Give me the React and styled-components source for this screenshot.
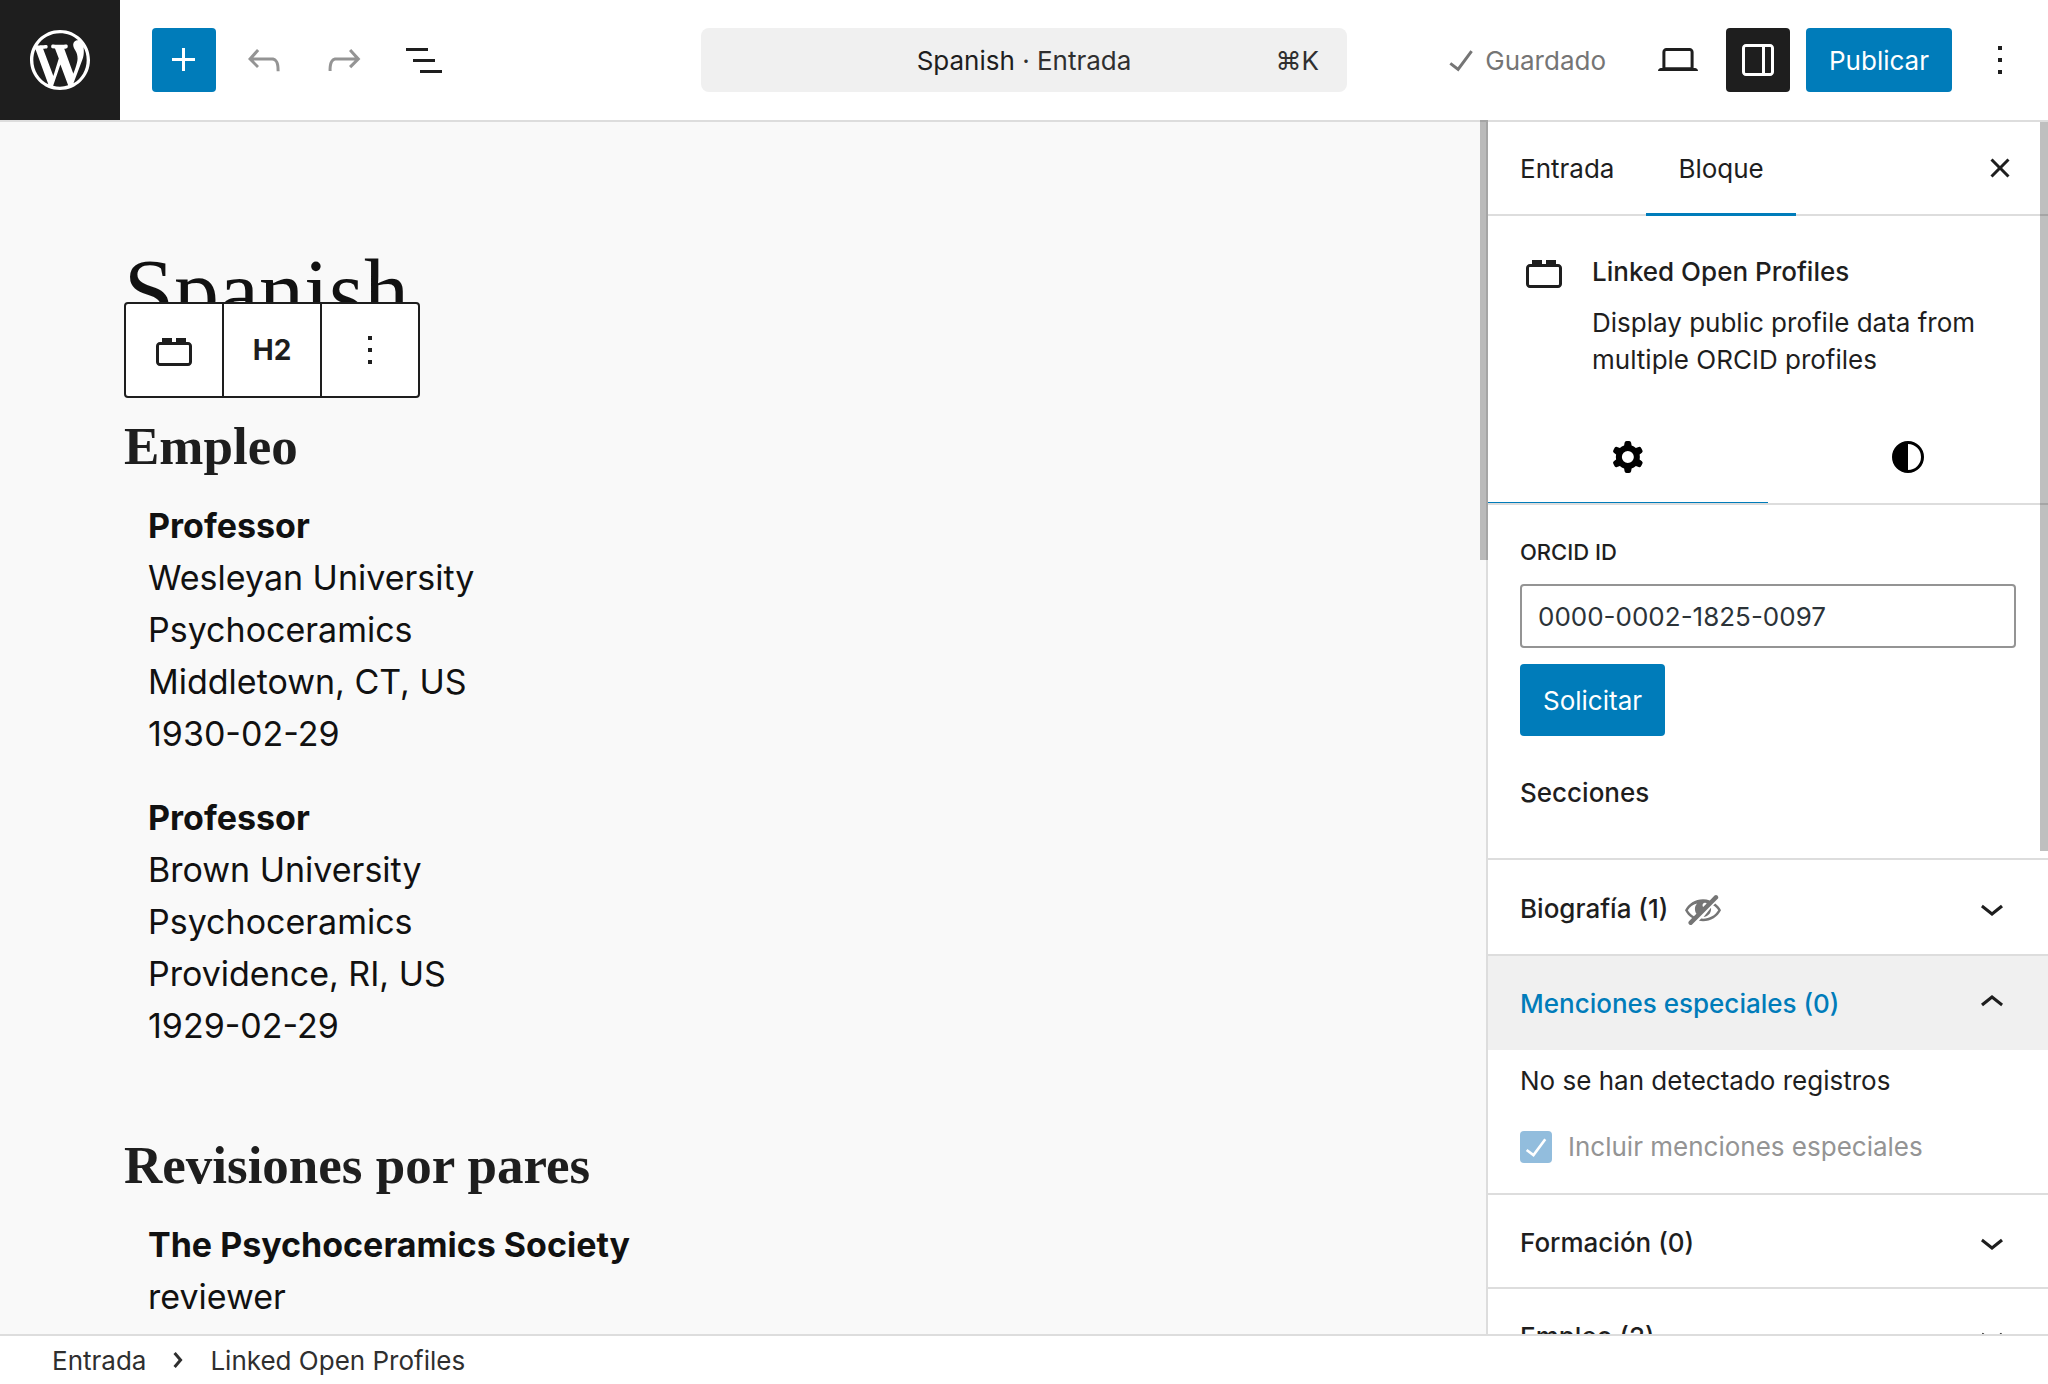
import React from "react";
import styled, { createGlobalStyle } from "styled-components";

const color = {
  ink: "#1e1e1e",
  text: "#2f2f2f",
  accent: "#007cba",
  line: "#dddddd",
  muted: "#757575",
  surface: "#f0f0f0",
  canvas: "#f9f9f9",
};

const GlobalStyle = createGlobalStyle`
  *, *::before, *::after { box-sizing: border-box; }
  html, body, #root { height: 100%; }
  body {
    margin: 0;
    color: ${color.ink};
    font-family: Inter, "Liberation Sans", sans-serif;
    font-size: 26px;
    line-height: 37px;
  }
  button, input { font: inherit; color: inherit; }
  button { margin: 0; padding: 0; border: 0; background: none; cursor: pointer; }
  h1, h2, h3, p, ul, ol { margin: 0; padding: 0; }
  ul, ol { list-style: none; }
`;

const paths = {
  wordpress:
    "M20 10c0-5.51-4.49-10-10-10C4.48 0 0 4.49 0 10c0 5.52 4.48 10 10 10 5.51 0 10-4.48 10-10zM7.78 15.37L4.37 6.22c.55-.02 1.17-.08 1.17-.08.5-.06.44-1.13-.06-1.11 0 0-1.45.11-2.37.11-.18 0-.37 0-.58-.01C4.12 2.69 6.87 1.11 10 1.11c2.33 0 4.45.87 6.05 2.34-.68-.11-1.65.39-1.65 1.58 0 .74.45 1.36.9 2.1.35.61.55 1.36.55 2.46 0 1.49-1.4 5-1.4 5l-3.03-8.37c.54-.02.82-.17.82-.17.5-.05.44-1.25-.06-1.22 0 0-1.44.12-2.38.12-.87 0-2.33-.12-2.33-.12-.5-.03-.56 1.2-.06 1.22l.92.08 1.26 3.41zM17.41 10c.24-.64.74-1.87.43-4.25.7 1.29 1.05 2.71 1.05 4.25 0 3.29-1.73 6.24-4.4 7.78.97-2.59 1.94-5.2 2.92-7.78zM6.1 18.09C3.12 16.65 1.11 13.53 1.11 10c0-1.3.23-2.48.72-3.59C3.25 10.3 4.67 14.2 6.1 18.09zm4.03-6.63l2.58 6.98c-.86.29-1.76.45-2.71.45-.79 0-1.57-.11-2.29-.33.81-2.38 1.62-4.74 2.42-7.1z",
  plus: "M11 12.5V17.5H12.5V12.5H17.5V11H12.5V6H11V11H6V12.5H11Z",
  undo: "M18.3 11.7c-.6-.6-1.4-.9-2.3-.9H6.7l2.9-3.3-1.1-1-4.5 5L8.5 16l1-1-2.7-2.7H16c.5 0 .9.2 1.3.5 1 1 1 3.4 1 4.5v.3h1.5v-.2c0-1.5 0-4.3-1.5-5.7z",
  redo: "M15.6 6.5l-1.1 1 2.9 3.3H8c-.9 0-1.7.3-2.3.9-1.4 1.5-1.4 4.2-1.4 5.6v.2h1.5v-.3c0-1.1 0-3.5 1-4.5.3-.3.7-.5 1.3-.5h9.2L14.5 15l1.1 1.1 4.6-4.6-4.6-5z",
  list: "M3 6h11v1.5H3V6Zm3.5 5.5h11V13h-11v-1.5ZM21 17H10v1.5h11V17Z",
  check: "M16.7 7.1l-6.3 8.5-3.3-2.5-.9 1.2 4.5 3.4L17.9 8z",
  desktop:
    "M20.5 16h-.7V8c0-1.1-.9-2-2-2H6.2c-1.1 0-2 .9-2 2v8h-.7c-.8 0-1.5.7-1.5 1.5h20c0-.8-.7-1.5-1.5-1.5zM5.7 8c0-.3.2-.5.5-.5h11.6c.3 0 .5.2.5.5v7.6H5.7V8z",
  drawer:
    "M18 4H6c-1.1 0-2 .9-2 2v12c0 1.1.9 2 2 2h12c1.1 0 2-.9 2-2V6c0-1.1-.9-2-2-2zm-4 14.5H6c-.3 0-.5-.2-.5-.5V6c0-.3.2-.5.5-.5h8v13zm4.5-.5c0 .3-.2.5-.5.5h-2.5v-13H18c.3 0 .5.2.5.5v12z",
  more: "M13 19h-2v-2h2v2zm0-6h-2v-2h2v2zm0-6h-2V5h2v2z",
  close:
    "M12 13.06l3.712 3.713 1.061-1.06L13.061 12l3.712-3.712-1.06-1.06L12 10.938 8.288 7.227l-1.061 1.06L10.939 12l-3.712 3.712 1.06 1.061L12 13.061z",
  block:
    "M19 8h-1V6h-5v2h-2V6H6v2H5c-1.1 0-2 .9-2 2v8c0 1.1.9 2 2 2h14c1.1 0 2-.9 2-2v-8c0-1.1-.9-2-2-2zm.5 10c0 .3-.2.5-.5.5H5c-.3 0-.5-.2-.5-.5v-8c0-.3.2-.5.5-.5h14c.3 0 .5.2.5.5v8z",
  cog: "M10.289 4.836A1 1 0 0111.275 4h1.306a1 1 0 01.987.836l.244 1.466c.787.26 1.503.679 2.108 1.218l1.393-.522a1 1 0 011.216.437l.653 1.13a1 1 0 01-.23 1.273l-1.148.944a6.025 6.025 0 010 2.435l1.149.946a1 1 0 01.23 1.272l-.653 1.13a1 1 0 01-1.216.437l-1.394-.522c-.605.54-1.32.958-2.108 1.218l-.244 1.466a1 1 0 01-.987.836h-1.306a1 1 0 01-.986-.836l-.244-1.466a5.995 5.995 0 01-2.108-1.218l-1.394.522a1 1 0 01-1.217-.436l-.653-1.131a1 1 0 01.23-1.272l1.149-.946a6.026 6.026 0 010-2.435l-1.148-.944a1 1 0 01-.23-1.272l.653-1.131a1 1 0 011.217-.437l1.393.522a5.994 5.994 0 012.108-1.218l.244-1.466zM14.929 12a3 3 0 11-6 0 3 3 0 016 0z",
  styles:
    "M20 12a8 8 0 11-16 0 8 8 0 0116 0zm-1.5 0a6.5 6.5 0 01-6.5 6.5v-13a6.5 6.5 0 016.5 6.5z",
  down: "M17.5 11.6L12 16l-5.5-4.4.9-1.2L12 14l4.5-3.6 1 1.2z",
  up: "M6.5 12.4L12 8l5.5 4.4-.9 1.2L12 10l-4.5 3.6-1-1.2z",
  right:
    "M10.8622 8.04053L14.2805 12.0286L10.8622 16.0167L9.72327 15.0405L12.3049 12.0286L9.72327 9.01672L10.8622 8.04053Z",
  hidden:
    "M17.2 3.3l.16.17c.39.39.39 1.02 0 1.41L4.55 17.7c-.39.39-1.03.39-1.41 0l-.17-.17c-.39-.39-.39-1.02 0-1.41l1.59-1.6c-1.57-1-2.76-2.3-3.56-3.93.81-1.65 2.03-2.98 3.64-3.99S8.04 5.09 10 5.09c1.2 0 2.33.21 3.4.6l2.38-2.39c.39-.39 1.03-.39 1.42 0zm-7.09 4.01c-.23.25-.34.54-.34.88 0 .31.12.58.31.81l1.8-1.79c-.13-.12-.28-.21-.45-.26-.11-.01-.28-.03-.49-.04-.33.03-.6.16-.83.4zM2.4 10.59c.69 1.23 1.71 2.25 3.05 3.05l1.28-1.28c-.51-.69-.77-1.47-.77-2.36 0-1.06.36-1.98 1.09-2.76-1.04.27-1.96.7-2.76 1.26-.8.58-1.43 1.27-1.89 2.09zM16.1 7.2c1.25.87 2.22 2 2.9 3.39-.81 1.65-2.03 2.98-3.64 3.99S11.96 16.09 10 16.09c-.7 0-1.38-.07-2.03-.2l1.1-1.1c.31.04.62.06.93.06 1.63 0 3.12-.39 4.46-1.17s2.38-1.81 3.14-3.09c-.62-1.1-1.5-1.95-2.5-2.4zM14 9.4c.03.2.04.4.04.6 0 1.1-.38 2.04-1.15 2.81s-1.6 1.2-2.6 1.2z",
};

function Icon({ name, size = 48, viewBox = "0 0 24 24" }) {
  return (
    <svg width={size} height={size} viewBox={viewBox} fill="currentColor" fillRule="evenodd" aria-hidden="true">
      <path d={paths[name]} />
    </svg>
  );
}

/* Shell */

const Page = styled.div`
  display: flex;
  flex-direction: column;
  height: 100vh;
  background: #fff;
  overflow: hidden;
  svg { display: block; flex: none; }
`;

const Header = styled.header`
  flex: none;
  display: grid;
  grid-template-columns: 1fr minmax(0, 646px) 1fr;
  align-items: center;
  border-bottom: 2px solid ${color.line};
`;

const HeaderStart = styled.div`
  display: flex;
  align-items: center;
  gap: 16px;
`;

const HeaderEnd = styled(HeaderStart)`
  justify-content: flex-end;
  padding-right: 16px;
`;

const Logo = styled.a`
  display: grid;
  place-items: center;
  width: 120px;
  height: 120px;
  margin-right: 16px;
  background: ${color.ink};
  color: #fff;
`;

const tones = {
  plain: { bg: "transparent", fg: color.ink },
  primary: { bg: color.accent, fg: "#fff" },
  pressed: { bg: color.ink, fg: "#fff" },
  dim: { bg: "transparent", fg: "#949494" },
};

const IconButton = styled.button`
  display: grid;
  place-items: center;
  width: 64px;
  height: 64px;
  border-radius: 4px;
  background: ${({ $tone = "plain" }) => tones[$tone].bg};
  color: ${({ $tone = "plain" }) => tones[$tone].fg};
`;

const PrimaryButton = styled.button`
  height: ${({ $tall }) => ($tall ? 72 : 64)}px;
  padding: 0 23px;
  border-radius: 4px;
  background: ${color.accent};
  color: #fff;
`;

const CommandBar = styled.button`
  display: grid;
  grid-template-columns: 1fr auto 1fr;
  align-items: center;
  height: 64px;
  padding: 0 28px;
  border-radius: 8px;
  background: ${color.surface};
  color: ${color.text};
`;

const CommandTitle = styled.span`
  grid-column: 2;
  b { font-weight: 400; color: ${color.ink}; }
`;

const Shortcut = styled.span`
  justify-self: end;
`;

const Saved = styled.div`
  display: flex;
  align-items: center;
  margin-right: 24px;
  color: ${color.muted};
`;

const Body = styled.div`
  flex: 1;
  min-height: 0;
  display: flex;
`;

/* Editor canvas */

const Canvas = styled.main`
  flex: 1;
  min-width: 0;
  padding: 116px 124px 0;
  overflow-y: auto;
  scrollbar-width: none;
  background: ${color.canvas};
`;

const Title = styled.h1`
  color: #111;
  font: 400 90px/108px "Liberation Serif", serif;
  margin-bottom: 68px;
`;

const Block = styled.div`
  position: relative;
`;

const Toolbar = styled.div`
  position: absolute;
  left: 0;
  bottom: calc(100% + 16px);
  display: flex;
  border: 2px solid ${color.ink};
  border-radius: 4px;
  background: #fff;
`;

const ToolbarButton = styled.button`
  display: grid;
  place-items: center;
  box-sizing: content-box;
  width: 96px;
  height: 92px;
  font-size: 28px;
  font-weight: 700;
  & + & { border-left: 2px solid ${color.ink}; }
`;

const Section = styled.section`
  margin-bottom: 81px;
`;

const SectionTitle = styled.h2`
  font: 700 53px/64px "Liberation Serif", serif;
  margin-bottom: 22px;
`;

const Entries = styled.ul`
  display: flex;
  flex-direction: column;
  gap: 32px;
  padding-left: 24px;
`;

const Entry = styled.li`
  color: #111;
  font-size: 34px;
  line-height: 52px;
  strong, span { display: block; }
  strong { font-weight: 700; }
`;

/* Settings sidebar */

const Sidebar = styled.aside`
  position: relative;
  flex: none;
  width: 562px;
  border-left: 2px solid ${color.line};
  background: #fff;
`;

const SidebarScroll = styled.div`
  height: 100%;
  overflow-y: auto;
  scrollbar-width: none;
`;

const Thumb = styled.div`
  position: absolute;
  width: 8px;
  background: rgba(0, 0, 0, 0.25);
  ${({ $side }) =>
    $side === "canvas" ? "left: -8px; top: -2px; height: 440px;" : "right: 0; top: 0; height: 729px;"}
`;

const Tabs = styled.div`
  display: flex;
  align-items: center;
  height: 94px;
  padding-right: 16px;
  box-shadow: inset 0 -2px ${color.line};
`;

const Tab = styled.button`
  height: 94px;
  padding: 0 32px 2px;
  box-shadow: ${({ $active }) => ($active ? `inset 0 -3px ${color.accent}` : "none")};
`;

const TabClose = styled(IconButton)`
  margin-left: auto;
  margin-bottom: 2px;
`;

const Card = styled.div`
  display: flex;
  gap: 24px;
  padding: 32px;
`;

const CardTitle = styled.h2`
  margin-bottom: 8px;
  font-size: 26px;
  font-weight: 500;
  line-height: 48px;
`;

const ViewTabs = styled.div`
  display: grid;
  grid-template-columns: 1fr 1fr;
  border-bottom: 2px solid ${color.line};
`;

const ViewTab = styled.button`
  display: grid;
  place-items: center;
  height: 93px;
  color: #000;
  box-shadow: ${({ $active }) => ($active ? `inset 0 -1px ${color.accent}` : "none")};
`;

const Form = styled.form`
  display: flex;
  flex-direction: column;
  align-items: flex-start;
  gap: 16px;
  padding: 32px 32px 0;
`;

const FieldLabel = styled.label`
  font-size: 22px;
  font-weight: 500;
  line-height: 31px;
  text-transform: uppercase;
`;

const TextInput = styled.input`
  width: 100%;
  height: 64px;
  padding: 0 16px;
  border: 2px solid #949494;
  border-radius: 4px;
  background: #fff;
  color: #2c3338;
`;

const GroupTitle = styled.h2`
  padding: 40px 32px 48px;
  font-size: 26px;
  font-weight: 500;
  line-height: 34px;
`;

const PanelRoot = styled.section`
  border-top: 2px solid ${color.line};
`;

const PanelToggle = styled.button`
  display: flex;
  align-items: center;
  gap: 15px;
  width: 100%;
  padding: 30px 32px 26px;
  border-bottom: ${({ $open }) => ($open ? `2px solid ${color.surface}` : "0")};
  background: ${({ $open }) => ($open ? color.surface : "#fff")};
  color: ${({ $open }) => ($open ? color.accent : color.ink)};
  font-weight: 500;
  line-height: 36px;
  text-align: left;
`;

const PanelBadge = styled.span`
  margin: -1px 0;
  color: ${color.muted};
`;

const PanelChevron = styled.span`
  margin: -8px 0 -6px auto;
  color: ${color.ink};
`;

const PanelBody = styled.div`
  display: flex;
  flex-direction: column;
  gap: 32px;
  padding: 12px 32px 30px;
`;

const CheckLabel = styled.label`
  display: flex;
  align-items: center;
  gap: 16px;
  line-height: 32px;
  color: #949494;
`;

const CheckMark = styled.span`
  display: grid;
  grid-template: 32px / 32px;
  place-items: center;
  color: #fff;
  & > * { grid-area: 1 / 1; }
  svg { pointer-events: none; }
`;

const CheckBox = styled.input`
  appearance: none;
  width: 32px;
  height: 32px;
  margin: 0;
  border-radius: 4px;
  background: #92bddd;
`;

const Footer = styled.footer`
  flex: none;
  border-top: 2px solid ${color.line};
  background: #fff;
`;

const Crumbs = styled.ol`
  display: flex;
  align-items: center;
  height: 48px;
  padding: 0 52px;
  color: ${color.text};
  li { display: flex; align-items: center; }
  svg { margin: 0 8px; }
`;

const sections = [
  {
    title: "Empleo",
    entries: [
      ["Professor", "Wesleyan University", "Psychoceramics", "Middletown, CT, US", "1930-02-29"],
      ["Professor", "Brown University", "Psychoceramics", "Providence, RI, US", "1929-02-29"],
    ],
  },
  {
    title: "Revisiones por pares",
    entries: [["The Psychoceramics Society", "reviewer"]],
  },
];

function Panel({ title, open = false, hidden = false, children }) {
  return (
    <PanelRoot>
      <PanelToggle type="button" $open={open} aria-expanded={open}>
        {title}
        {hidden && (
          <PanelBadge>
            <Icon name="hidden" size={40} viewBox="0 0 20 20" />
          </PanelBadge>
        )}
        <PanelChevron>
          <Icon name={open ? "up" : "down"} />
        </PanelChevron>
      </PanelToggle>
      {open && <PanelBody>{children}</PanelBody>}
    </PanelRoot>
  );
}

export default function App() {
  return (
    <Page>
      <GlobalStyle />
      <Header>
        <HeaderStart>
          <Logo href="#" aria-label="WordPress">
            <Icon name="wordpress" size={72} viewBox="-2 -2 24 24" />
          </Logo>
          <IconButton type="button" $tone="primary" aria-label="Añadir bloque">
            <Icon name="plus" />
          </IconButton>
          <IconButton type="button" $tone="dim" aria-label="Deshacer">
            <Icon name="undo" />
          </IconButton>
          <IconButton type="button" $tone="dim" aria-label="Rehacer">
            <Icon name="redo" />
          </IconButton>
          <IconButton type="button" aria-label="Vista de lista">
            <Icon name="list" />
          </IconButton>
        </HeaderStart>
        <CommandBar type="button">
          <CommandTitle>
            <b>Spanish</b> · Entrada
          </CommandTitle>
          <Shortcut>⌘K</Shortcut>
        </CommandBar>
        <HeaderEnd>
          <Saved>
            <Icon name="check" />
            Guardado
          </Saved>
          <IconButton type="button" aria-label="Ver">
            <Icon name="desktop" />
          </IconButton>
          <IconButton type="button" $tone="pressed" aria-label="Ajustes">
            <Icon name="drawer" />
          </IconButton>
          <PrimaryButton type="button">Publicar</PrimaryButton>
          <IconButton type="button" aria-label="Opciones">
            <Icon name="more" />
          </IconButton>
        </HeaderEnd>
      </Header>

      <Body>
        <Canvas>
          <Title>Spanish</Title>
          <Block>
            <Toolbar role="toolbar">
              <ToolbarButton type="button" aria-label="Linked Open Profiles">
                <Icon name="block" />
              </ToolbarButton>
              <ToolbarButton type="button">H2</ToolbarButton>
              <ToolbarButton type="button" aria-label="Opciones">
                <Icon name="more" />
              </ToolbarButton>
            </Toolbar>
            {sections.map((section) => (
              <Section key={section.title}>
                <SectionTitle>{section.title}</SectionTitle>
                <Entries>
                  {section.entries.map(([name, ...lines], index) => (
                    <Entry key={index}>
                      <strong>{name}</strong>
                      {lines.map((line) => (
                        <span key={line}>{line}</span>
                      ))}
                    </Entry>
                  ))}
                </Entries>
              </Section>
            ))}
          </Block>
        </Canvas>

        <Sidebar>
          <SidebarScroll>
            <Tabs>
              <Tab type="button">Entrada</Tab>
              <Tab type="button" $active>
                Bloque
              </Tab>
              <TabClose type="button" aria-label="Cerrar">
                <Icon name="close" />
              </TabClose>
            </Tabs>
            <Card>
              <Icon name="block" />
              <div>
                <CardTitle>Linked Open Profiles</CardTitle>
                <p>Display public profile data from multiple ORCID profiles</p>
              </div>
            </Card>
            <ViewTabs>
              <ViewTab type="button" $active aria-label="Ajustes">
                <Icon name="cog" />
              </ViewTab>
              <ViewTab type="button" aria-label="Estilos">
                <Icon name="styles" />
              </ViewTab>
            </ViewTabs>
            <Form onSubmit={(event) => event.preventDefault()}>
              <FieldLabel htmlFor="orcid">ORCID ID</FieldLabel>
              <TextInput id="orcid" type="text" defaultValue="0000-0002-1825-0097" />
              <PrimaryButton $tall>Solicitar</PrimaryButton>
            </Form>
            <GroupTitle>Secciones</GroupTitle>
            <Panel title="Biografía (1)" hidden />
            <Panel title="Menciones especiales (0)" open>
              <p>No se han detectado registros</p>
              <CheckLabel>
                <CheckMark>
                  <CheckBox type="checkbox" defaultChecked disabled />
                  <Icon name="check" size={42} />
                </CheckMark>
                Incluir menciones especiales
              </CheckLabel>
            </Panel>
            <Panel title="Formación (0)" />
            <Panel title="Empleo (2)" />
          </SidebarScroll>
          <Thumb $side="canvas" />
          <Thumb $side="sidebar" />
        </Sidebar>
      </Body>

      <Footer>
        <Crumbs>
          <li>Entrada</li>
          <li>
            <Icon name="right" />
            Linked Open Profiles
          </li>
        </Crumbs>
      </Footer>
    </Page>
  );
}
